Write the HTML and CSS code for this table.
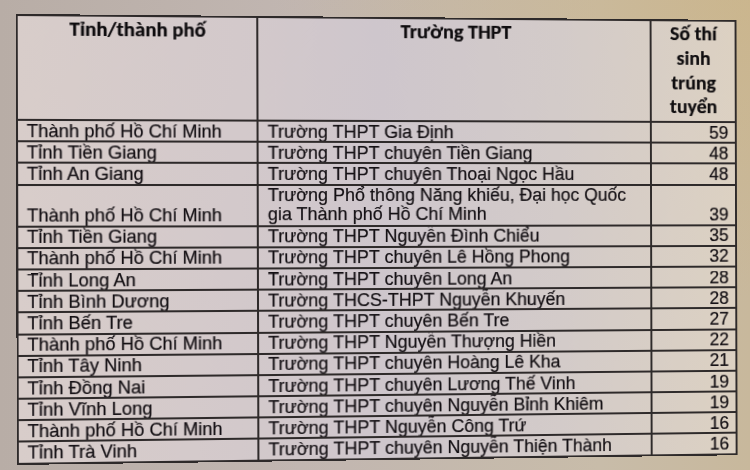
FILE: index.html
```html
<!DOCTYPE html>
<html lang="vi">
<head>
<meta charset="utf-8">
<link rel="stylesheet" href="styles.css">
</head>
<body>
<div class="photo">
  <table class="results">
    <colgroup>
      <col class="c-prov">
      <col class="c-school">
      <col class="c-num">
    </colgroup>
    <thead>
      <tr class="head">
        <th>Tỉnh/thành phố</th>
        <th>Trường THPT</th>
        <th class="num-head">Số thí<br>sinh<br>trúng<br>tuyển</th>
      </tr>
    </thead>
    <tbody>
      <tr><td>Thành phố Hồ Chí Minh</td><td>Trường THPT Gia Định</td><td class="n">59</td></tr>
      <tr><td>Tỉnh Tiền Giang</td><td>Trường THPT chuyên Tiền Giang</td><td class="n">48</td></tr>
      <tr><td>Tỉnh An Giang</td><td>Trường THPT chuyên Thoại Ngọc Hầu</td><td class="n">48</td></tr>
      <tr class="double"><td>Thành phố Hồ Chí Minh</td><td class="wrap">Trường Phổ thông Năng khiếu, Đại học Quốc<br>gia Thành phố Hồ Chí Minh</td><td class="n">39</td></tr>
      <tr><td>Tỉnh Tiền Giang</td><td>Trường THPT Nguyễn Đình Chiểu</td><td class="n">35</td></tr>
      <tr><td>Thành phố Hồ Chí Minh</td><td>Trường THPT chuyên Lê Hồng Phong</td><td class="n">32</td></tr>
      <tr><td>Tỉnh Long An</td><td>Trường THPT chuyên Long An</td><td class="n">28</td></tr>
      <tr><td>Tỉnh Bình Dương</td><td>Trường THCS-THPT Nguyễn Khuyến</td><td class="n">28</td></tr>
      <tr><td>Tỉnh Bến Tre</td><td>Trường THPT chuyên Bến Tre</td><td class="n">27</td></tr>
      <tr><td>Thành phố Hồ Chí Minh</td><td>Trường THPT Nguyễn Thượng Hiền</td><td class="n">22</td></tr>
      <tr><td>Tỉnh Tây Ninh</td><td>Trường THPT chuyên Hoàng Lê Kha</td><td class="n">21</td></tr>
      <tr><td>Tỉnh Đồng Nai</td><td>Trường THPT chuyên Lương Thế Vinh</td><td class="n">19</td></tr>
      <tr><td>Tỉnh Vĩnh Long</td><td>Trường THPT chuyên Nguyễn Bỉnh Khiêm</td><td class="n">19</td></tr>
      <tr><td>Thành phố Hồ Chí Minh</td><td>Trường THPT Nguyễn Công Trứ</td><td class="n">16</td></tr>
      <tr><td>Tỉnh Trà Vinh</td><td>Trường THPT chuyên Nguyễn Thiện Thành</td><td class="n">16</td></tr>
    </tbody>
  </table>
</div>
</body>
</html>
```
FILE: styles.css
```css
html, body {
  margin: 0;
  padding: 0;
}
body {
  width: 750px;
  height: 470px;
  overflow: hidden;
  background:
    radial-gradient(ellipse at 100% 0%, rgba(205, 180, 130, 0.55), rgba(205, 180, 130, 0) 45%),
    linear-gradient(90deg, #b8ada6 0%, #c1b6b1 40%, #c8bca9 80%, #c8b89c 100%);
}
.photo {
  padding: 16.5px 0 0 20.7px;
}
.results {
  border-collapse: collapse;
  table-layout: fixed;
  width: 722.4px;
  transform-origin: 50% 50%;
  transform: perspective(2000px) rotateY(5.6deg) rotateZ(-0.15deg);
  background: linear-gradient(90deg, #d8cdca 0%, #d3c9cb 30%, #cec6cc 50%, #d3cbc9 75%, #dcd1c2 100%);
  font-family: "Liberation Sans", Arial, sans-serif;
  font-size: 18px;
  color: #141014;
}
.c-prov { width: 236.4px; }
.c-school { width: 397.9px; }
.c-num { width: 88.1px; }
.results th,
.results td {
  border: 2px solid #2e2a2a;
  padding: 0 0 0.5px 8.5px;
  line-height: 18px;
  vertical-align: bottom;
  white-space: nowrap;
  overflow: hidden;
  -webkit-text-stroke: 0.2px #141014;
}
.results td.wrap {
  line-height: 19.5px;
  padding-bottom: 0;
}
.results th {
  font-family: Carlito, Lato, "Open Sans", sans-serif;
  font-weight: 800;
  font-size: 20.5px;
  color: #0e0c0e;
  text-align: center;
  vertical-align: top;
  padding: 0;
  line-height: 24.8px;
}
.head {
  height: 103px;
}
.results tbody tr {
  height: 21.2px;
}
.results tbody tr.double {
  height: 41px;
}
.results td.n {
  text-align: right;
  padding: 0 7px 0.5px 0;
}
```
